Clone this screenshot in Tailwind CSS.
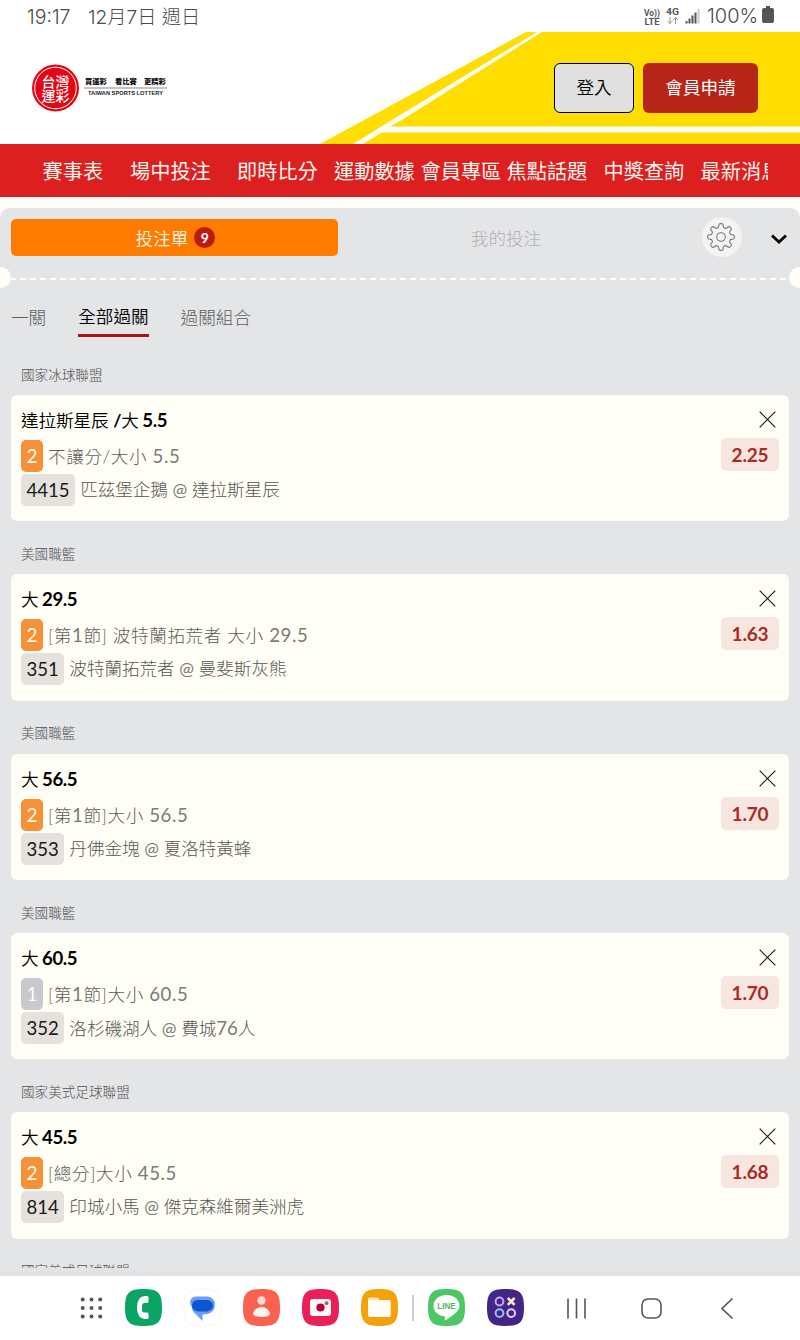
<!DOCTYPE html>
<html lang="zh-Hant">
<head>
<meta charset="utf-8">
<title>台灣運彩</title>
<script src="https://cdn.jsdelivr.net/npm/@tailwindcss/browser@4"></script>
</head>
<body class="w-[800px] h-[1340px] overflow-hidden bg-white flex flex-col font-['Lato','Noto_Sans_CJK_TC',sans-serif]">

<!-- status bar -->
<div class="h-8 shrink-0 flex items-center pl-[27px] pr-[26px] text-[#4c4c4c] font-light">
  <span class="pt-0.5 text-[19.5px] leading-8 w-[61px] whitespace-nowrap font-['Inter','Noto_Sans_CJK_TC',sans-serif]">19:17</span>
  <span class="pt-0.5 text-[19.2px] leading-8 whitespace-nowrap font-['Inter','Noto_Sans_CJK_TC',sans-serif]">12月7日 週日</span>
  <svg class="ml-auto" width="64" height="32" viewBox="0 0 64 32" font-family="Roboto, sans-serif" fill="#555" font-weight="700">
    <text x="0" y="16" font-size="9.5" textLength="16" lengthAdjust="spacingAndGlyphs">Vo))</text>
    <text x="0.5" y="25" font-size="9.5" textLength="15" lengthAdjust="spacingAndGlyphs">LTE</text>
    <text x="22" y="15" font-size="9.5" textLength="13" lengthAdjust="spacingAndGlyphs">4G</text>
    <path d="M26 17v6.500m-2.600-2.500 2.600 2.600 2.500-2.600M31.500 24v-6.500m-2.500 2.500 2.500-2.600 2.500 2.600" fill="none" stroke="#999" stroke-width="1"/>
    <path d="M41.500 21h2v2.500h-2zM44.500 18.500h2v5h-2zM47.500 15.500h2v8h-2zM50.500 12.500h2v11h-2z"/>
    <path d="M53.500 9h2v14.500h-2z" fill="#ccc"/>
  </svg>
  <span class="text-[20px] leading-8 w-[54px] -ml-px whitespace-nowrap font-['Inter']">100%</span>
  <svg class="-mt-0.5 ml-px" width="12" height="18" viewBox="0 0 12 18"><path d="M4 0h4v2h2q2 0 2 2v11q0 2-2 2H2q-2 0-2-2V4q0-2 2-2h2z" fill="#555"/></svg>
</div>

<!-- header -->
<header class="relative h-28 shrink-0 flex items-center pl-8 pr-[42px] bg-white">
  <svg class="absolute inset-0" width="800" height="112" viewBox="0 0 800 112">
    <path d="M526 0H800V112H320z" fill="#ffdd00"/>
    <path d="M537 0h5L400 89l-10 5.500H800v6H382L363 112h-10L400 83z" fill="#fffef5"/>
  </svg>
  <svg class="relative" width="136" height="48" viewBox="0 0 136 48">
    <circle cx="23.500" cy="24" r="23.500" fill="#e20715"/>
    <circle cx="23.500" cy="24" r="20.800" fill="none" stroke="#fff" stroke-width="1"/>
    <g font-family="Noto Sans CJK TC, sans-serif" font-weight="500" fill="#fff" font-size="14">
      <text x="9.500" y="22.500">台灣</text><text x="9.500" y="36.500">運彩</text>
    </g>
    <g font-family="Noto Sans CJK TC, sans-serif" font-weight="900" fill="#111" font-size="7.300">
      <text x="53" y="20.300">買運彩</text><text x="83" y="20.300">看比賽</text><text x="112" y="20.300">更精彩</text>
    </g>
    <path d="M52 24h83" stroke="#888" stroke-width="1.200"/>
    <text x="56" y="31.300" font-family="Liberation Sans, sans-serif" font-weight="700" font-size="5.700" fill="#222" textLength="75" lengthAdjust="spacingAndGlyphs">TAIWAN SPORTS LOTTERY</text>
  </svg>
  <div class="relative ml-auto flex gap-[9px] text-[17.6px] leading-none">
    <button class="w-20 h-[50px] rounded-md border border-black bg-[#e0e0e0] text-black font-[350]">登入</button>
    <button class="w-[115px] h-[50px] rounded-md bg-[#b72519] text-white">會員申請</button>
  </div>
</header>

<!-- navigation -->
<nav class="h-[53px] shrink-0 bg-[#dc1f1f] px-8">
  <div class="h-full pl-[10.500px] pt-px flex items-center overflow-hidden whitespace-nowrap text-[20.2px] leading-7 text-[#fff6ee]">
    <span class="w-[87.500px] shrink-0">賽事表</span>
    <span class="w-[107px] shrink-0">場中投注</span>
    <span class="w-[97px] shrink-0">即時比分</span>
    <span class="w-[86.500px] shrink-0">運動數據</span>
    <span class="w-[86px] shrink-0">會員專區</span>
    <span class="w-[97px] shrink-0">焦點話題</span>
    <span class="w-[97px] shrink-0">中獎查詢</span>
    <span class="shrink-0">最新消息</span>
  </div>
</nav>

<!-- bet slip -->
<main class="grow min-h-0 bg-[#fffdf5] pt-[11px] flex flex-col">
  <div class="grow min-h-0 bg-[#e4e5e7] rounded-t-[10px] flex flex-col">
    <div class="h-[59px] pt-[11px] pl-[11px] flex items-start shrink-0">
      <div class="w-[327px] h-[37px] rounded-[5px] bg-[#ff7b00] flex items-center justify-center gap-1.5 pl-0.5 text-[17.6px] leading-none text-[#fff6e4] font-[350]">
        <span class="pt-0.5">投注單</span>
        <span class="size-[21px] rounded-full bg-[#bd1a0d] flex items-center justify-center text-sm leading-none font-bold text-white">9</span>
      </div>
      <div class="w-[336px] h-[37px] pt-0.5 flex items-center justify-center text-[17.6px] leading-none text-[#b0b0b3] font-light">我的投注</div>
      <div class="ml-[28px] -mt-0.5 size-10 rounded-full bg-[#f3f3f3] flex items-center justify-center">
        <svg width="30" height="30" viewBox="0 0 30 30" fill="none" stroke="#777" stroke-width="1.100" class="-ml-0.5">
          <path id="gear"/>
          <circle cx="15" cy="15" r="4.300"/>
        </svg>
      </div>
      <svg class="ml-[28px] mt-[14px]" width="18" height="12" viewBox="0 0 18 12"><path d="M2 2.500 9 9l7-6.500" fill="none" stroke="#0a0a0a" stroke-width="2.900"/></svg>
    </div>

    <div class="h-[21px] shrink-0 flex items-center justify-between">
      <div class="w-[11px] h-[21px] rounded-r-full bg-[#fffdf5]"></div>
      <svg class="grow mt-0.5" height="3"><path d="M-1 2H790" stroke="#fff" stroke-width="2" stroke-dasharray="6 4"/></svg>
      <div class="w-[11px] h-[21px] rounded-l-full bg-[#fffdf5]"></div>
    </div>

    <div class="h-[54px] shrink-0 pl-[11px] pt-[15px] flex gap-8 text-[17.6px] text-[#606062] font-light">
      <span class="h-[34px] leading-[30px]">一關</span>
      <span class="h-[34px] leading-[28px] border-b-3 border-[#a9141c] text-black font-[350]">全部過關</span>
      <span class="h-[34px] leading-[30px]">過關組合</span>
    </div>

    <section id="bets" class="h-[926px] shrink-0 overflow-hidden px-[11px]"></section>
    <div class="grow bg-linear-to-b from-[#e4e5e7] to-[#dfe0e2]"></div>
  </div>
</main>

<!-- system dock -->
<footer class="h-16 shrink-0 bg-white">
  <svg width="800" height="64" viewBox="0 0 800 64">
    <defs><path id="tile" d="M0-18.500C14.500-18.500 18.500-14.500 18.500 0S14.500 18.500 0 18.500-18.500 14.500-18.500 0-14.500-18.500 0-18.500z"/></defs>
    <g fill="#555">
      <circle cx="82.700" cy="23.400" r="2"/><circle cx="91.500" cy="23.400" r="2"/><circle cx="100.200" cy="23.400" r="2"/>
      <circle cx="82.700" cy="32" r="2"/><circle cx="91.500" cy="32" r="2"/><circle cx="100.200" cy="32" r="2"/>
      <circle cx="82.700" cy="40.600" r="2"/><circle cx="91.500" cy="40.600" r="2"/><circle cx="100.200" cy="40.600" r="2"/>
    </g>
    <g transform="translate(143.500 31.500)"><use href="#tile" fill="#0aa564"/>
      <path d="M3.500-11.500q1.500 0 1.500 1.500v4q0 1.500-1.500 1.500H1Q-1.500-4.500-1.500-2v4.500q0 2.500 2.500 2.500h2.500Q5 5 5 6.500v3.500q0 1.500-1.500 1.500H1Q-6.500 10.500-6.500 0T1-11.500z" fill="#fff"/></g>
    <g transform="translate(202.500 31.500)"><use href="#tile" fill="#fff" stroke="#f1f1f4" stroke-width=".8"/>
      <path d="M-6-11H4q5 0 7 3.500 1.500 1 1.500 4Q12.500 4.500 5 6.500L0 7v6.500L-9 4.500Q-10.500 2.500-10.500 0q-2-3-2-6 1-5 6.500-5z" fill="#6d9dfb"/>
      <path d="M-5-7.500H5q5.500 1 5.500 5.500T4.500 4h-9Q-10.500 3-10.500-2T-5-7.500z" fill="#0b57d0"/></g>
    <g transform="translate(261.500 31.500)"><use href="#tile" fill="#fb6150"/>
      <circle cy="-7" r="4.200" fill="#ffd9d0"/><path d="M0-.5Q7 0 8.500 6 8 9.500 0 9.500T-8.500 6Q-7 0 0-.5z" fill="#fff7ee"/></g>
    <g transform="translate(320.500 31.500)"><use href="#tile" fill="#ea2058"/>
      <rect x="-10.500" y="-8.500" width="21" height="17" rx="3" fill="#fff7f8"/><circle cy="0" r="4.100" fill="#b5003d"/><circle cx="6" cy="-4.300" r="1.900" fill="#d8456f"/></g>
    <g transform="translate(379.500 31.500)"><use href="#tile" fill="#f3a20c"/>
      <path d="M-11.500-5v-3.500q0-1.500 1.500-1.500h8q1.500 0 1.500 1.500V-5z" fill="#ffe6ac"/>
      <path d="M-11.500-7.500H9.500q1.800 0 1.800 1.800V7.500q0 1.900-1.800 1.900h-19q-2 0-2-1.900z" fill="#fffdf5"/></g>
    <path d="M413 19v26" stroke="#bdbdbd" stroke-width="1.500"/>
    <g transform="translate(446.500 31.500)"><use href="#tile" fill="#4cc764"/>
      <path d="M0-12.500c7.200 0 13 4.700 13 10.700C13 4.500 5 8.500-1.500 13q-.7-.5 0-4C-9 8-13 3.500-13-1.800c0-6 5.800-10.700 13-10.700z" fill="#fff"/>
      <text x="-9.200" y="1.700" font-family="Liberation Sans, sans-serif" font-weight="700" font-size="8.400" fill="#4cb863" textLength="18.400" lengthAdjust="spacingAndGlyphs">LINE</text></g>
    <g transform="translate(505.500 31.500)"><use href="#tile" fill="#432585"/>
      <g fill="none" stroke-width="2"><circle cx="-6" cy="-6" r="3.900" stroke="#c6a4f7"/><path d="m2.300-9.500 6.800 6.900m0-6.900-6.800 6.900" stroke="#fbe6d0" stroke-width="2.600"/><circle cx="-6" cy="5.600" r="3.900" stroke="#8ec1fa"/><circle cx="5.700" cy="5.600" r="3.900" stroke="#e9c6f4"/></g></g>
    <g fill="none" stroke="#555" stroke-width="1.600">
      <path d="M568 22.500v20M576.500 22.500v20M585 22.500v20"/>
      <rect x="642" y="23" width="19" height="19" rx="6"/>
      <path d="M732.500 22.500 722 32.500l10.500 10" stroke-width="1.700"/>
    </g>
  </svg>
</footer>

<script>
const bets = [
  ['國家冰球聯盟', '達拉斯星辰 <b>/</b>大', '5.5', 2, '不讓分/大小 5.5', '4415', '匹茲堡企鵝 @ 達拉斯星辰', '2.25'],
  ['美國職籃', '大', '29.5', 2, '[第1節] 波特蘭拓荒者 大小 29.5', '351', '波特蘭拓荒者 @ 曼斐斯灰熊', '1.63'],
  ['美國職籃', '大', '56.5', 2, '[第1節]大小 56.5', '353', '丹佛金塊 @ 夏洛特黃蜂', '1.70'],
  ['美國職籃', '大', '60.5', 1, '[第1節]大小 60.5', '352', '洛杉磯湖人 @ 費城76人', '1.70'],
  ['國家美式足球聯盟', '大', '45.5', 2, '[總分]大小 45.5', '814', '印城小馬 @ 傑克森維爾美洲虎', '1.68'],
];
const label = t => `<h3 class="h-[52.850px] pl-[10px] pt-[22.500px] text-[13.6px] leading-5 font-light text-[#505052]">${t}</h3>`;
const latin = t => t.replace(/[\d.]+/g, '<span class="font-normal text-[18.6px] text-[#7a7a77]">$&</span>').replace('@', '<span class="font-normal text-[17.6px] text-[#7a7a77]">@</span>');
document.getElementById('bets').innerHTML = bets.map(([league, name, line, n, market, code, teams, odds]) => `
  ${label(league)}
  <article class="h-[126.500px] rounded-md bg-[#fffef6] pl-[10px] pr-[10px] pt-[10px] flex justify-between">
    <div class="whitespace-nowrap text-[17.6px]">
      <div class="h-[35px] leading-[30px] text-black font-[350] tracking-[-0.1px]">${name}<b class="ml-[3.500px] text-[18.6px] tracking-[-0.4px]">${line}</b></div>
      <div class="h-[34px] flex items-start gap-[5px] leading-8">
        <span class="${n === 2 ? 'bg-[#f79138]' : 'bg-[#c9c8ce]'} w-[22px] h-8 rounded-[5px] text-center text-[19px] text-[#fff9ec]">${n}</span>
        <span class="tracking-[0.6px] text-[#5c5c59] font-light">${latin(market)}</span>
      </div>
      <div class="h-8 flex items-start gap-[5px] leading-8">
        <span class="h-8 px-[5.500px] rounded-[5px] bg-[#e5e2dd] text-[18.6px] text-[#1a1a1a]">${code}</span>
        <span class="tracking-[-0.05px] text-[#565653] font-light">${latin(teams)}</span>
      </div>
    </div>
    <div class="flex flex-col items-end">
      <svg class="mt-[6px] mr-[3px]" width="17" height="17" viewBox="0 0 17 17"><path d="m.7.700 15.600 15.600m0-15.600L.7 16.300" stroke="#1a1a1a" stroke-width="1.200"/></svg>
      <span class="mt-[10px] w-[58px] h-[33px] rounded-[5px] bg-[#f7e5df] text-center text-[19px] tracking-[-0.2px] leading-[34px] font-bold text-[#aa2a26]">${odds}</span>
    </div>
  </article>`).join('') + label('國家美式足球聯盟');

// Eight-lobed cog outline
let d = '';
for (let i = 0; i <= 192; i++) {
  const a = i * Math.PI / 96, r = 11.5 + 1.9 * Math.tanh(2.2 * Math.cos(8 * a));
  d += (i ? 'L' : 'M') + (15 + r * Math.cos(a)).toFixed(2) + ' ' + (15 + r * Math.sin(a)).toFixed(2);
}
document.getElementById('gear').setAttribute('d', d);
</script>
</body>
</html>
